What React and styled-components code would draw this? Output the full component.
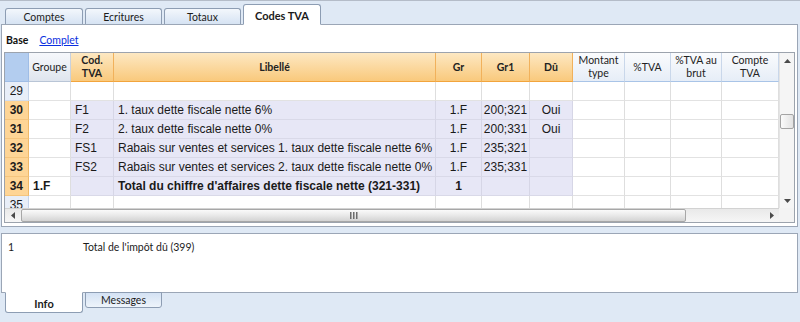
import React from "react";
import styled, { createGlobalStyle, css } from "styled-components";

const GlobalStyle = createGlobalStyle`
  html, body { margin: 0; padding: 0; }
  body {
    background: #dfe9f5;
    font-family: Lato, "Liberation Sans", sans-serif;
    color: #1b1b1b;
  }
`;

const COLS = "24px 42px 43px 322px 46px 48px 43px 52px 46px 51px 57px";

const columns = [
  { key: "num", label: "", head: "corner" },
  { key: "groupe", label: "Groupe", head: "plain" },
  { key: "cod", label: "Cod.\nTVA", head: "orange", lav: true },
  { key: "lib", label: "Libellé", head: "orange", lav: true },
  { key: "gr", label: "Gr", head: "orange", lav: true, align: "center" },
  { key: "gr1", label: "Gr1", head: "orange", lav: true, align: "center" },
  { key: "du", label: "Dû", head: "orange", lav: true, align: "center" },
  { key: "montant", label: "Montant\ntype", head: "light" },
  { key: "pct", label: "%TVA", head: "light" },
  { key: "brut", label: "%TVA au\nbrut", head: "light" },
  { key: "compte", label: "Compte\nTVA", head: "light" },
];

const rows = [
  { n: 29 },
  { n: 30, used: true, cod: "F1", lib: "1. taux dette fiscale nette 6%", gr: "1.F", gr1: "200;321", du: "Oui" },
  { n: 31, used: true, cod: "F2", lib: "2. taux dette fiscale nette 0%", gr: "1.F", gr1: "200;331", du: "Oui" },
  { n: 32, used: true, cod: "FS1", lib: "Rabais sur ventes et services 1. taux dette fiscale nette 6%", gr: "1.F", gr1: "235;321" },
  { n: 33, used: true, cod: "FS2", lib: "Rabais sur ventes et services 2. taux dette fiscale nette 0%", gr: "1.F", gr1: "235;331" },
  { n: 34, used: true, bold: true, groupe: "1.F", lib: "Total du chiffre d'affaires dette fiscale nette (321-331)", gr: "1" },
  { n: 35 },
];

const topTabs = [
  { label: "Comptes", width: 78 },
  { label: "Ecritures", width: 77 },
  { label: "Totaux", width: 77 },
  { label: "Codes TVA", width: 78, active: true },
];

const Screen = styled.div`
  width: 800px;
  height: 322px;
  overflow: hidden;
  border-top: 1px solid #b4bcc8;
  box-sizing: border-box;
  display: flex;
  flex-direction: column;
`;

const TabRow = styled.div`
  display: flex;
  align-items: flex-end;
  gap: 2px;
  height: 23px;
  padding-left: 5px;
`;

const TopTab = styled.div`
  position: relative;
  z-index: 2;
  box-sizing: border-box;
  width: ${(p) => p.$w}px;
  height: ${(p) => (p.$active ? 21 : 16)}px;
  margin-bottom: ${(p) => (p.$active ? -1 : 0)}px;
  border: 1px solid #8d9db3;
  border-bottom: ${(p) => (p.$active ? "1px solid #fff" : "none")};
  border-radius: 3px 3px 0 0;
  background: ${(p) => (p.$active ? "#fff" : "linear-gradient(#f3f7fc, #d6e3f3)")};
  font-size: ${(p) => (p.$active ? 11 : 10.5)}px;
  font-weight: ${(p) => (p.$active ? 700 : 400)};
  display: flex;
  align-items: center;
  justify-content: center;
  padding-top: ${(p) => (p.$active ? 1 : 0)}px;
`;

const Panel = styled.div`
  margin-left: 1px;
  width: 797px;
  height: 203px;
  box-sizing: border-box;
  background: #fff;
  border: 1px solid #9ba6b6;
  padding: 0 2px 3px 2px;
  display: flex;
  flex-direction: column;
`;

const ViewBar = styled.div`
  height: 27px;
  box-sizing: border-box;
  padding: 8px 0 0 2px;
  display: flex;
  gap: 11px;
  font-size: 10.5px;
  line-height: 14px;
`;

const ViewLink = styled.span`
  font-weight: ${(p) => (p.$current ? 700 : 400)};
  color: ${(p) => (p.$current ? "#111" : "#0a2ee0")};
  text-decoration: ${(p) => (p.$current ? "none" : "underline")};
`;

const GridFrame = styled.div`
  border: 1px solid #9ca3ad;
  display: grid;
  grid-template-columns: 774px 15px;
  grid-template-rows: 155px 14px;
`;

const Sheet = styled.div`
  overflow: hidden;
`;

const Line = styled.div`
  display: grid;
  grid-template-columns: ${COLS};
`;

const headLook = {
  corner: css`
    background: #b3cdef;
    border-right: 1px solid #9fbde6;
    border-bottom: 1px solid #9fbde6;
  `,
  plain: css`
    background: linear-gradient(#f6f8fb, #dfe5ee);
    border-right: 1px solid #c8d1de;
    border-bottom: 1px solid #b9c5d6;
    font-weight: 400;
  `,
  orange: css`
    background: linear-gradient(#fde8c2, #f9c97c);
    border-right: 1px solid #f1b15b;
    border-bottom: 1px solid #f2a43c;
    font-weight: 700;
  `,
  light: css`
    background: linear-gradient(#fafbfd, #e6edf7);
    border-right: 1px solid #c9d7ea;
    border-bottom: 1px solid #a9c4e7;
    font-weight: 400;
  `,
};

const HeadCell = styled.div`
  height: 29px;
  box-sizing: border-box;
  display: flex;
  align-items: center;
  justify-content: center;
  text-align: center;
  white-space: pre-line;
  font-size: 10.5px;
  line-height: 13px;
  color: #222;
  ${(p) => headLook[p.$look]}
`;

const NumCell = styled.div`
  height: 19px;
  box-sizing: border-box;
  padding-right: 5px;
  text-align: right;
  font-family: "Liberation Sans", Arial, sans-serif;
  font-size: 12px;
  line-height: 18px;
  font-weight: ${(p) => (p.$used ? 700 : 400)};
  background: ${(p) => (p.$used ? "#fed596" : "#e8eef8")};
  border-right: 1px solid ${(p) => (p.$used ? "#f0b968" : "#c4d3ea")};
  border-bottom: 1px solid ${(p) => (p.$used ? "#f5c57e" : "#d2ddee")};
`;

const Cell = styled.div`
  height: 19px;
  box-sizing: border-box;
  padding: 0 ${(p) => (p.$align === "center" ? 0 : 4)}px;
  text-align: ${(p) => p.$align || "left"};
  white-space: nowrap;
  overflow: hidden;
  font-family: "Liberation Sans", Arial, sans-serif;
  font-size: 12px;
  line-height: 18px;
  font-weight: ${(p) => (p.$bold ? 700 : 400)};
  color: #1a1a1a;
  background: ${(p) => (p.$lav ? "#e7e7f6" : "#fff")};
  border-right: 1px solid ${(p) => (p.$lav ? "#d6d6e6" : "#dedede")};
  border-bottom: 1px solid ${(p) => (p.$lav ? "#d9d9e8" : "#e2e2e2")};
`;

const VScroll = styled.div`
  display: flex;
  flex-direction: column;
  background: #f5f5f5;
  border-left: 1px solid #e4e4e4;
`;

const ArrowBox = styled.div`
  height: ${(p) => p.$h || 15}px;
  width: ${(p) => p.$w || 15}px;
  flex: none;
  display: flex;
  align-items: center;
  justify-content: center;
`;

const VTrack = styled.div`
  flex: 1;
  padding-top: 46px;
`;

const VThumb = styled.div`
  height: 15px;
  box-sizing: border-box;
  border: 1px solid #a4a4a4;
  border-radius: 2px;
  background: linear-gradient(90deg, #fbfbfb, #e2e2e2);
`;

const HScroll = styled.div`
  display: flex;
  align-items: stretch;
  background: linear-gradient(#e9e9e9, #f6f6f6);
  border-top: 1px solid #d2d2d2;
`;

const HThumb = styled.div`
  width: 665px;
  margin-left: 1px;
  box-sizing: border-box;
  border: 1px solid #a7a7a7;
  border-radius: 2px;
  background: linear-gradient(#fafafa, #e8e8e8 50%, #d3d3d3);
  display: flex;
  align-items: center;
  justify-content: center;
`;

const HTrack = styled.div`
  flex: 1;
`;

const Corner = styled.div`
  background: #f3f3f3;
`;

const InfoPanel = styled.div`
  margin: 6px 0 0 1px;
  width: 797px;
  height: 60px;
  box-sizing: border-box;
  background: #fff;
  border: 1px solid #9ba6b6;
  padding: 6px 0 0 6px;
  display: flex;
  font-size: 10.5px;
  line-height: 14px;
`;

const InfoKey = styled.span`
  width: 75px;
`;

const BottomTabs = styled.div`
  display: flex;
  align-items: flex-start;
  gap: 2px;
  padding-left: 5px;
  margin-top: -1px;
`;

const BottomTab = styled.div`
  position: relative;
  z-index: 2;
  box-sizing: border-box;
  width: ${(p) => p.$w}px;
  height: ${(p) => (p.$active ? 21 : 16)}px;
  border: 1px solid #8d9db3;
  border-top: ${(p) => (p.$active ? "1px solid #fff" : "1px solid #8d9db3")};
  border-radius: 0 0 3px 3px;
  background: ${(p) => (p.$active ? "#fff" : "linear-gradient(#d4e2f4, #eef4fb)")};
  font-size: ${(p) => (p.$active ? 11 : 10.5)}px;
  font-weight: ${(p) => (p.$active ? 700 : 400)};
  display: flex;
  align-items: center;
  justify-content: center;
  padding-top: ${(p) => (p.$active ? 1 : 0)}px;
`;

const Tri = ({ dir }) => {
  const pts = {
    up: "0,4 3.5,0 7,4",
    down: "0,0 3.5,4 7,0",
    left: "4,0 0,3.5 4,7",
    right: "0,0 4,3.5 0,7",
  }[dir];
  const w = dir === "up" || dir === "down" ? 7 : 4;
  const h = dir === "up" || dir === "down" ? 4 : 7;
  return (
    <svg width={w} height={h} viewBox={`0 0 ${w} ${h}`}>
      <polygon points={pts} fill="#4a4a4a" />
    </svg>
  );
};

const Grip = () => (
  <svg width="8" height="7" viewBox="0 0 8 7">
    <rect x="0" y="0" width="1.5" height="7" fill="#6d6d6d" />
    <rect x="3" y="0" width="1.5" height="7" fill="#6d6d6d" />
    <rect x="6" y="0" width="1.5" height="7" fill="#6d6d6d" />
  </svg>
);

function App() {
  return (
    <Screen>
      <GlobalStyle />
      <TabRow>
        {topTabs.map((t) => (
          <TopTab key={t.label} $w={t.width} $active={t.active}>
            {t.label}
          </TopTab>
        ))}
      </TabRow>

      <Panel>
        <ViewBar>
          <ViewLink $current>Base</ViewLink>
          <ViewLink>Complet</ViewLink>
        </ViewBar>

        <GridFrame>
          <Sheet>
            <Line>
              {columns.map((c) => (
                <HeadCell key={c.key} $look={c.head}>
                  {c.label}
                </HeadCell>
              ))}
            </Line>
            {rows.map((r) => (
              <Line key={r.n}>
                <NumCell $used={r.used}>{r.n}</NumCell>
                {columns.slice(1).map((c) => (
                  <Cell
                    key={c.key}
                    $lav={r.used && c.lav}
                    $align={c.align}
                    $bold={r.bold}
                  >
                    {r[c.key]}
                  </Cell>
                ))}
              </Line>
            ))}
          </Sheet>

          <VScroll>
            <ArrowBox>
              <Tri dir="up" />
            </ArrowBox>
            <VTrack>
              <VThumb />
            </VTrack>
            <ArrowBox>
              <Tri dir="down" />
            </ArrowBox>
          </VScroll>

          <HScroll>
            <ArrowBox $h={13}>
              <Tri dir="left" />
            </ArrowBox>
            <HThumb>
              <Grip />
            </HThumb>
            <HTrack />
            <ArrowBox $h={13}>
              <Tri dir="right" />
            </ArrowBox>
          </HScroll>
          <Corner />
        </GridFrame>
      </Panel>

      <InfoPanel>
        <InfoKey>1</InfoKey>
        <span>Total de l'impôt dû (399)</span>
      </InfoPanel>

      <BottomTabs>
        <BottomTab $w={78} $active>
          Info
        </BottomTab>
        <BottomTab $w={77}>Messages</BottomTab>
      </BottomTabs>
    </Screen>
  );
}

export default App;
